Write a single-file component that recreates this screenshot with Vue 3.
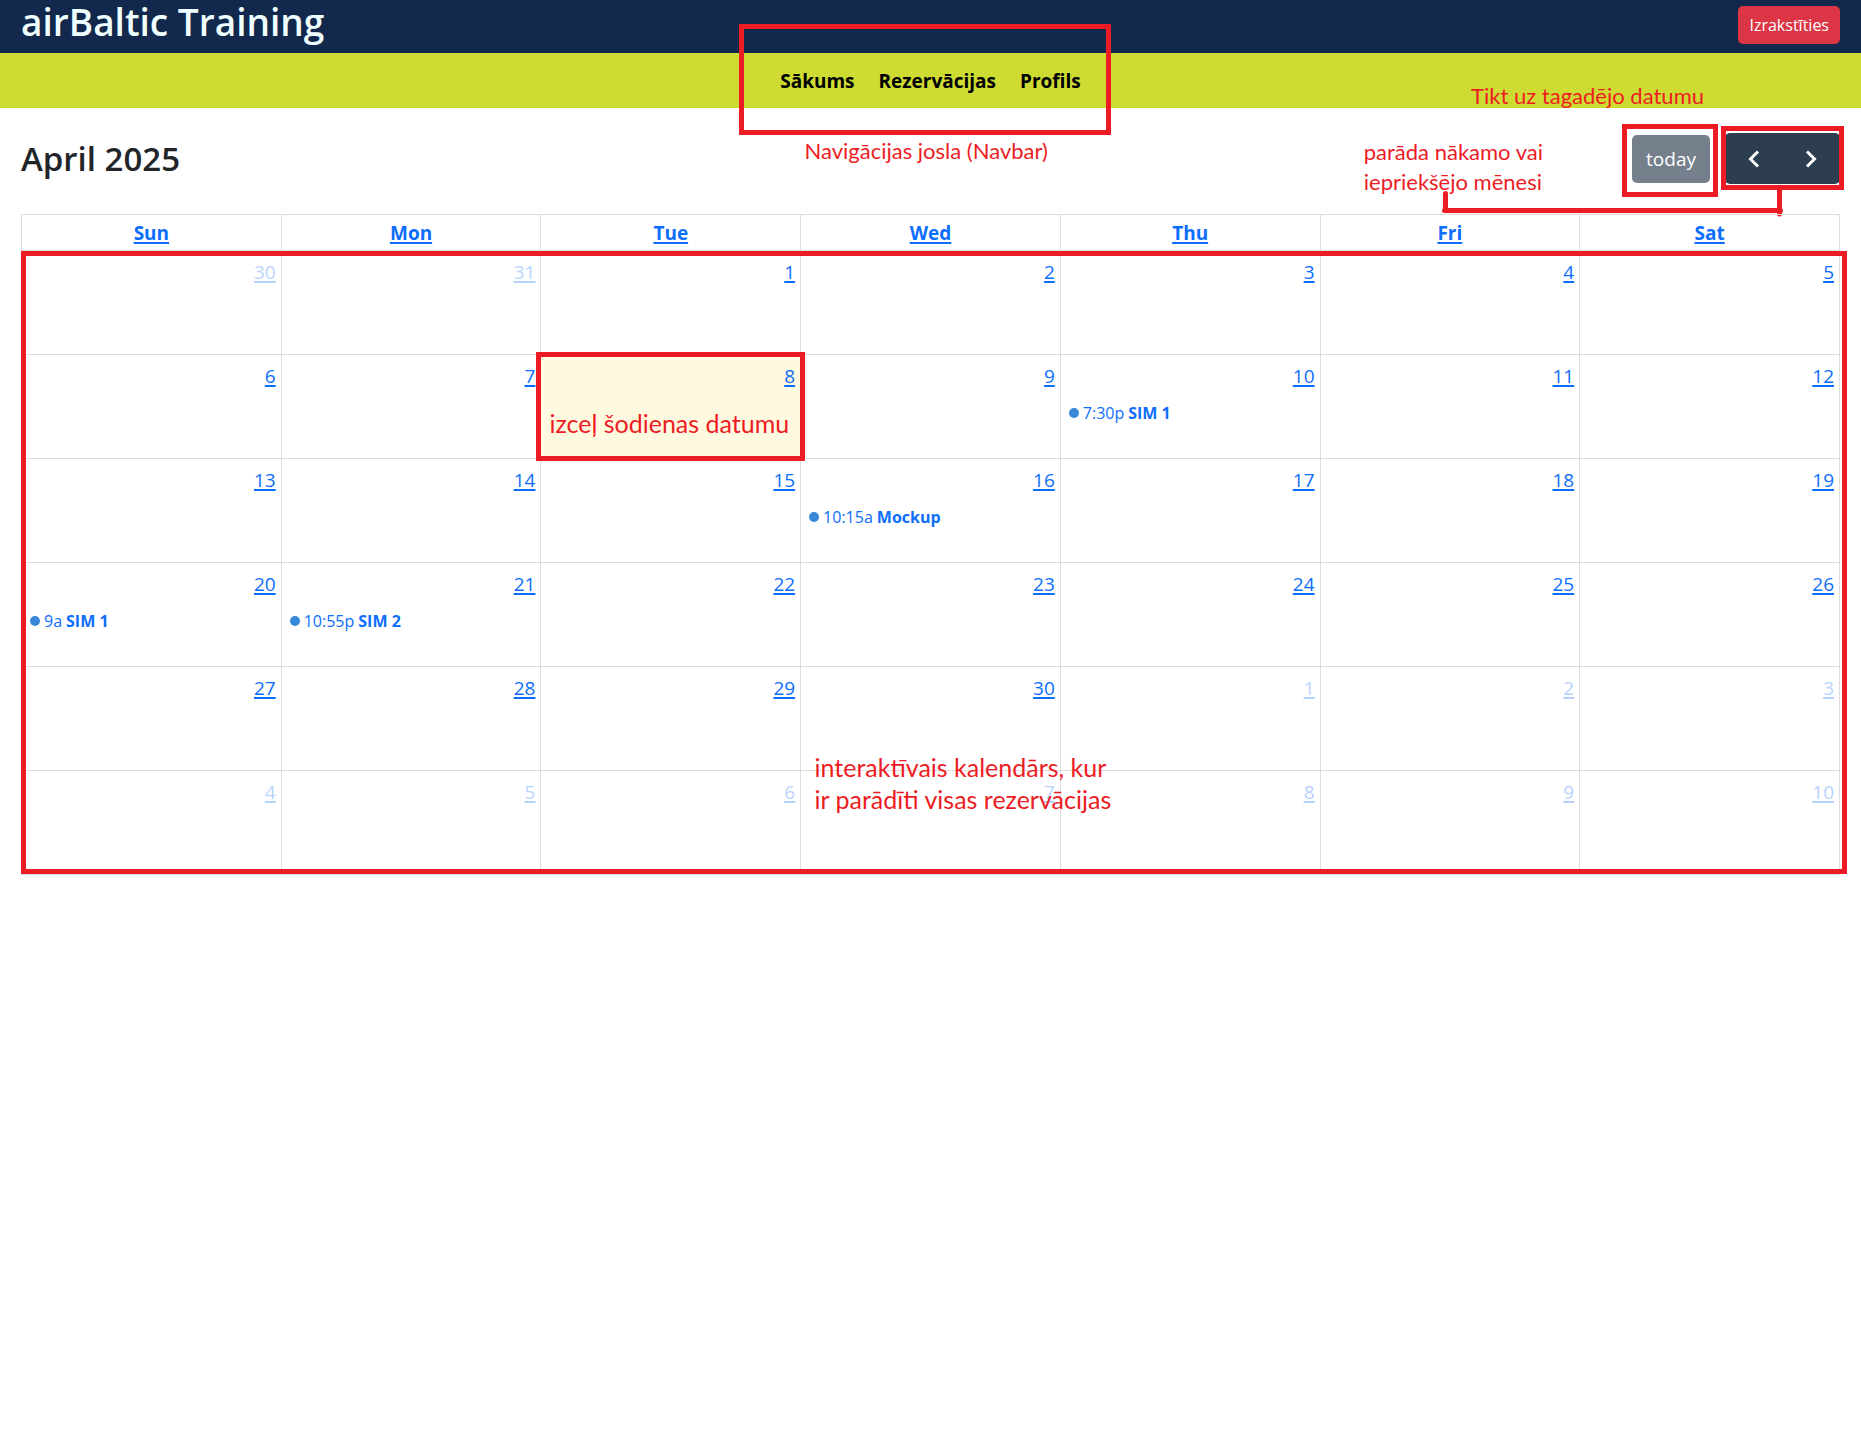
<script setup>
const navLinks = ['Sākums', 'Rezervācijas', 'Profils']
const weekdays = ['Sun', 'Mon', 'Tue', 'Wed', 'Thu', 'Fri', 'Sat']

const events = {
  10: { time: '7:30p', title: 'SIM 1' },
  16: { time: '10:15a', title: 'Mockup' },
  20: { time: '9a', title: 'SIM 1' },
  21: { time: '10:55p', title: 'SIM 2' },
}

// Six weeks starting on Sunday, March 30
const weeks = Array.from({ length: 6 }, (_, week) =>
  Array.from({ length: 7 }, (_, weekday) => {
    const date = new Date(2025, 2, 30 + week * 7 + weekday)
    const current = date.getMonth() === 3
    const number = date.getDate()
    return {
      key: date.getMonth() + '-' + number,
      number,
      current,
      today: current && number === 8,
      event: current ? events[number] : undefined,
    }
  })
)
</script>

<template>
  <div class="page">
    <header class="header">
      <h1 class="brand">airBaltic Training</h1>
      <button type="button" class="logout">Izrakstīties</button>
    </header>

    <nav class="navbar">
      <a v-for="link in navLinks" :key="link" href="#" class="nav-link">{{ link }}</a>
      <span class="frame nav-frame"></span>
      <span class="note nav-note">Navigācijas josla (Navbar)</span>
    </nav>

    <main class="content">
      <div class="toolbar">
        <h2 class="month">April 2025</h2>
        <div class="actions">
          <div class="framed">
            <button type="button" class="today-button" disabled>today</button>
            <span class="frame today-frame"></span>
          </div>
          <div class="framed pager">
            <button type="button" class="pager-button" aria-label="Previous month">
              <svg width="12" height="18" viewBox="0 0 12 18"><path d="M10 1.500 2.500 9l7.500 7.500" /></svg>
            </button>
            <button type="button" class="pager-button" aria-label="Next month">
              <svg width="12" height="18" viewBox="0 0 12 18"><path d="M2 1.500 9.500 9 2 16.500" /></svg>
            </button>
            <span class="frame pager-frame"></span>
          </div>
        </div>
        <span class="note date-note">Tikt uz tagadējo datumu</span>
        <span class="note month-note">parāda nākamo vai<br />iepriekšējo mēnesi</span>
        <svg class="connector" width="342" height="27" viewBox="0 0 342 27">
          <path d="M3.500 3.500V20.500M2.500 20.500H338.500M337.500 0V24" />
        </svg>
      </div>

      <div class="calendar-wrap">
        <table class="calendar">
          <thead>
            <tr>
              <th v-for="day in weekdays" :key="day" scope="col"><a href="#">{{ day }}</a></th>
            </tr>
          </thead>
          <tbody>
            <tr v-for="(week, index) in weeks" :key="index">
              <td v-for="day in week" :key="day.key" :class="{ current: day.today }">
                <div class="day">
                  <a href="#" class="number" :class="{ muted: !day.current }">{{ day.number }}</a>
                  <a v-if="day.event" href="#" class="event">
                    <span class="dot"></span>
                    <span class="time">{{ day.event.time }}</span>
                    <strong>{{ day.event.title }}</strong>
                  </a>
                  <template v-if="day.today">
                    <span class="frame day-frame"></span>
                    <span class="note large day-note">izceļ šodienas datumu</span>
                  </template>
                </div>
              </td>
            </tr>
          </tbody>
        </table>
        <span class="frame calendar-frame"></span>
        <span class="note large calendar-note">interaktīvais kalendārs, kur<br />ir parādīti visas rezervācijas</span>
      </div>
    </main>
  </div>
</template>

<style>
body {
  margin: 0;
  background: #fff;
}
</style>

<style scoped>
.page {
  font-family: "Open Sans", "Noto Sans", sans-serif;
  font-size: 19px;
  color: #212529;
}

.page * {
  box-sizing: border-box;
}

button {
  border: 0;
  font-family: inherit;
  cursor: pointer;
}

/* Header */
.header {
  display: flex;
  justify-content: space-between;
  align-items: flex-start;
  padding: 0 21px;
  background: #12284c;
}

.brand {
  margin: 0;
  font-size: 37px;
  font-weight: 600;
  line-height: 43px;
  color: azure;
}

.logout {
  margin: 6px 0 9px;
  padding: 0 11px;
  border-radius: 5px;
  background: #dc3545;
  color: #fff;
  font-size: 16px;
  line-height: 38px;
}

.navbar {
  position: relative;
  display: flex;
  justify-content: center;
  gap: 24px;
  padding: 15px 0 13px;
  background: #cddb32;
}

.nav-link {
  color: #000;
  font-size: 19px;
  font-weight: 700;
  line-height: 27px;
  text-decoration: none;
}

/* Toolbar */
.content {
  padding: 25px 21px;
}

.toolbar {
  position: relative;
  display: flex;
  justify-content: space-between;
  align-items: center;
  margin-bottom: 30px;
}

.month {
  margin: 0;
  font-size: 33px;
  font-weight: 600;
  line-height: 44px;
}

.actions {
  display: flex;
  align-items: center;
  gap: 15px;
}

.framed {
  position: relative;
  display: flex;
}

.today-button {
  padding: 0 14px;
  border-radius: 5px;
  background: #76808c;
  color: #fff;
  font-size: 19px;
  line-height: 48px;
}

.pager {
  padding-right: 1px;
  border-radius: 5px;
  background: #2c3e50;
}

.pager-button {
  display: flex;
  align-items: center;
  justify-content: center;
  width: 57px;
  height: 51px;
  padding: 0;
  background: transparent;
}

.pager-button path {
  fill: none;
  stroke: #fff;
  stroke-width: 3;
}

/* Calendar */
.calendar-wrap {
  position: relative;
}

.calendar {
  width: 100%;
  table-layout: fixed;
  border-collapse: collapse;
}

.calendar th,
.calendar td {
  padding: 0;
  border: 1px solid #ddd;
}

.calendar a {
  color: #0d6efd;
  text-decoration-thickness: 2px;
  text-underline-offset: 2px;
}

.calendar th {
  padding-top: 1px;
  font-size: 19px;
  font-weight: 700;
  line-height: 34px;
}

.calendar .current {
  background: #fff9df;
}

.day {
  position: relative;
  display: flex;
  flex-direction: column;
  height: 103px;
  padding: 6px 5px;
}

.number {
  align-self: flex-end;
  line-height: 30px;
}

.muted {
  opacity: 0.3;
}

.calendar .event {
  display: flex;
  align-items: center;
  gap: 4px;
  margin-top: 9px;
  padding-left: 3px;
  font-size: 16px;
  line-height: 26px;
  text-decoration: none;
}

.dot {
  width: 10px;
  height: 10px;
  border-radius: 50%;
  background: #3788d8;
}

/* Annotations */
.frame {
  position: absolute;
  border: 5px solid #ed1c24;
  pointer-events: none;
}

.nav-frame {
  top: -29px;
  bottom: -27px;
  left: calc(50% - 192px);
  width: 372px;
}

.today-frame {
  inset: -11px -8px -14px -10px;
}

.pager-frame {
  inset: -7px -4px -6px;
}

.day-frame {
  inset: -3px -5px;
}

.calendar-frame {
  inset: 37px -7px 1px 0;
}

.note {
  position: absolute;
  z-index: 1;
  color: #ed1c24;
  font-family: Lato, sans-serif;
  font-size: 22px;
  line-height: 30px;
  white-space: nowrap;
  pointer-events: none;
}

.large {
  font-size: 25px;
  line-height: 32px;
}

.nav-note {
  top: 83px;
  left: calc(50% - 126px);
}

.date-note {
  top: -52px;
  right: 136px;
}

.month-note {
  top: 4px;
  right: 297px;
}

.day-note {
  top: 52px;
  left: 8px;
}

.calendar-note {
  bottom: 60px;
  left: calc(50% - 116px);
}

.connector {
  position: absolute;
  top: 57px;
  right: 56px;
  fill: none;
  stroke: #ed1c24;
  stroke-width: 5;
  stroke-linecap: round;
}
</style>
